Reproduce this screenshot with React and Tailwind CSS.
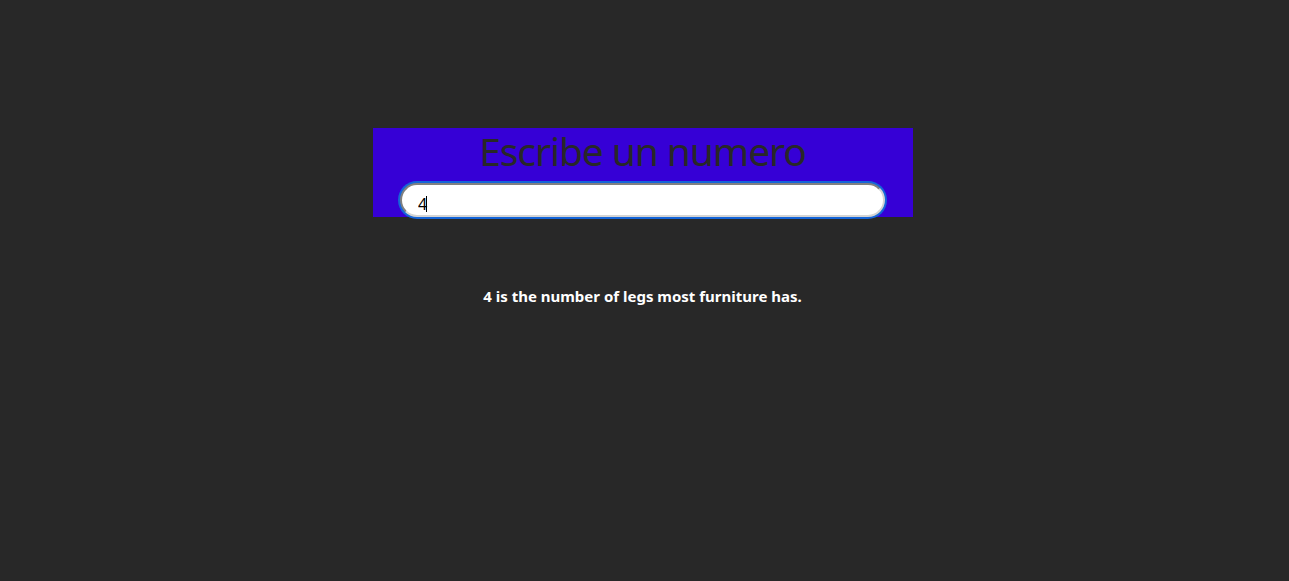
import React from "react";

export default function App() {
  return (
    <div className="min-h-screen bg-[#282828] pr-[4px] pt-[128px] font-['Noto_Sans',sans-serif]">
      <div className="mx-auto flex h-[89px] w-[540px] flex-col items-center bg-[#3600d6] pt-[3px]">
        <h1 className="text-[39px] leading-[40px] font-normal tracking-[-1.1px] text-[#282828]">
          Escribe un numero
        </h1>
        <div className="relative mt-[12px] w-[485px]">
          <input
            type="text"
            defaultValue="4"
            readOnly
            className="block h-[34px] w-full rounded-full border-2 border-[#d4d4d4] bg-white pl-[16px] pt-[7px] text-[16px] text-black outline-none ring-2 ring-[#1565d8] [border-style:inset] font-['Noto_Sans',sans-serif]"
          />
          <span className="pointer-events-none absolute left-[26px] top-[13px] h-[16px] w-px bg-black" />
        </div>
      </div>
      <p className="mt-[69px] text-center text-[15px] leading-[20px] font-bold text-white">
        4 is the number of legs most furniture has.
      </p>
    </div>
  );
}
